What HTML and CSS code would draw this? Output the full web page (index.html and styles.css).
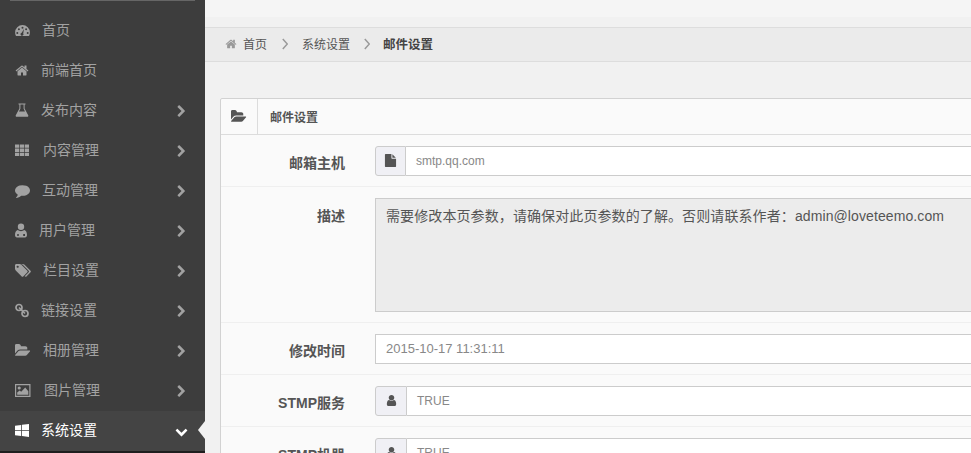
FILE: index.html
```html
<!DOCTYPE html>
<html lang="zh-CN">
<head>
<meta charset="utf-8">
<title>邮件设置</title>
<link rel="stylesheet" href="styles.css">
</head>
<body>
<svg class="defs" aria-hidden="true">
  <symbol id="home" viewBox="0 0 1792 1792"><path d="M1472 992v480q0 26-19 45t-45 19h-384v-384h-256v384h-384q-26 0-45-19t-19-45v-480q0-1 .5-3t.5-3l575-474 575 474q1 2 1 6zm223-69l-62 74q-8 9-21 11h-3q-13 0-21-7l-692-577-692 577q-12 8-24 7-13-2-21-11l-62-74q-8-10-7-23.5t11-21.5l719-599q32-26 76-26t76 26l244 204v-195q0-14 9-23t23-9h192q14 0 23 9t9 23v408l219 182q10 8 11 21.5t-7 23.5z"/></symbol>
  <symbol id="right" viewBox="0 0 1792 1792"><path d="M1363 877l-742 742q-19 19-45 19t-45-19l-166-166q-19-19-19-45t19-45l531-531-531-531q-19-19-19-45t19-45l166-166q19-19 45-19t45 19l742 742q19 19 19 45t-19 45z"/></symbol>
  <symbol id="down" viewBox="0 0 1792 1792"><path d="M1683 808l-742 741q-19 19-45 19t-45-19l-742-741q-19-19-19-45.5t19-45.5l166-165q19-19 45-19t45 19l531 531 531-531q19-19 45-19t45 19l166 165q19 19 19 45.5t-19 45.5z"/></symbol>
  <symbol id="folder" viewBox="0 0 1920 1792" preserveAspectRatio="xMinYMid meet"><path d="M1815 952q0 31-31 66l-336 396q-43 51-120.5 86.5t-143.5 35.5h-1088q-34 0-60.5-13t-26.5-43q0-31 31-66l336-396q43-51 120.5-86.5t143.5-35.5h1088q34 0 60.5 13t26.5 43zm-343-344v160h-832q-94 0-197 47.5t-164 119.5l-337 396-5 6q0-4-.5-12.5t-.5-12.5v-960q0-92 66-158t158-66h320q92 0 158 66t66 158v32h544q92 0 158 66t66 158z"/></symbol>
  <symbol id="user" viewBox="0 0 1792 1792"><path d="M1536 1399q0 109-62.5 187t-150.5 78h-854q-88 0-150.5-78t-62.5-187q0-85 8.5-160.5t31.5-152 58.5-131 94-89 134.5-34.5q131 128 313 128t313-128q76 0 134.5 34.5t94 89 58.5 131 31.5 152 8.5 160.5zm-256-887q0 159-112.5 271.5t-271.5 112.5-271.5-112.5-112.5-271.5 112.5-271.5 271.5-112.5 271.5 112.5 112.5 271.5z"/></symbol>
  <symbol id="comment" viewBox="0 0 1792 1792" preserveAspectRatio="xMinYMid meet"><path d="M1792 896q0 174-120 321.5t-326 233-450 85.5q-70 0-145-8-198 175-460 242-49 14-114 22-17 2-30.5-9t-17.5-29v-1q-3-4-.5-12t2-10 4.5-9.5l6-9 7-8.5 8-9q7-8 31-34.5t34.5-38 31-39.5 32.5-51 27-59 26-76q-157-89-247.5-220t-90.5-281q0-130 71-248.5t191-204.5 286-136.5 348-50.5q244 0 450 85.5t326 233 120 321.5z"/></symbol>
  <symbol id="file" viewBox="0 0 1792 1792"><path d="M1152 512v-472q22 14 36 28l408 408q14 14 28 36h-472zm-128 32q0 40 28 68t68 28h544v1056q0 40-28 68t-68 28h-1344q-40 0-68-28t-28-68v-1600q0-40 28-68t68-28h800v544z"/></symbol>
  <symbol id="tags" viewBox="0 0 1920 1792" preserveAspectRatio="xMinYMid meet"><path d="M448 448q0-53-37.5-90.5t-90.5-37.5-90.5 37.5-37.5 90.5 37.5 90.5 90.5 37.5 90.5-37.5 37.5-90.5zm1067 576q0 53-37 90l-491 492q-39 37-91 37-53 0-90-37l-715-716q-38-37-64.5-101t-26.5-117v-416q0-52 38-90t90-38h416q53 0 117 26.5t102 64.5l715 714q37 39 37 91zm384 0q0 53-37 90l-491 492q-38 37-91 37-36 0-59-14t-53-45l470-470q37-37 37-90 0-52-37-91l-715-714q-38-38-102-64.5t-117-26.5h224q53 0 117 26.5t102 64.5l715 714q37 39 37 91z"/></symbol>
  <symbol id="gauge" viewBox="0 0 15 15" preserveAspectRatio="xMinYMid meet"><path fill-rule="evenodd" d="M7.5 2a7.4 7.4 0 0 1 7.4 7.4c0 1.3-.3 2.5-.9 3.6H1a7.4 7.4 0 0 1-.9-3.6A7.4 7.4 0 0 1 7.5 2zM7.5 3.8a1 1 0 1 0 0 2 1 1 0 0 0 0-2zM3.9 5.3a1 1 0 1 0 0 2 1 1 0 0 0 0-2zM11.1 5.3a1 1 0 1 0 0 2 1 1 0 0 0 0-2zM2.3 8.9a1 1 0 1 0 0 2 1 1 0 0 0 0-2zM12.7 8.9a1 1 0 1 0 0 2 1 1 0 0 0 0-2zM9 6 6.7 9.8a1.5 1.5 0 1 0 1.5.6z"/></symbol>
  <symbol id="flask" viewBox="0 0 14 15" preserveAspectRatio="xMinYMid meet"><path fill-rule="evenodd" d="M3.5.5h7v1H9.6v4l3.6 6.7c.4.8 0 1.6-.8 1.6H1.6c-.8 0-1.2-.8-.8-1.6l3.6-6.7v-4h-.9zM5.4 1.5v4.3L4 8.6h6L8.6 5.8V1.5z"/></symbol>
  <symbol id="grid" viewBox="0 0 16 15" preserveAspectRatio="xMinYMid meet"><path d="M0 1.5h4.2v3.3H0zM4.9 1.5h4.2v3.3H4.9zM9.8 1.5H14v3.3H9.8zM0 5.6h4.2v3.3H0zM4.9 5.6h4.2v3.3H4.9zM9.8 5.6H14v3.3H9.8zM0 9.7h4.2V13H0zM4.9 9.7h4.2V13H4.9zM9.8 9.7H14V13H9.8z"/></symbol>
  <symbol id="doctor" viewBox="0 0 12 15" preserveAspectRatio="xMinYMid meet"><path fill-rule="evenodd" d="M6 .5a3.2 3.2 0 1 1 0 6.4A3.2 3.2 0 0 1 6 .5zM2.6 7.1C4.6 8.5 7.4 8.5 9.4 7.1c1.7.5 2.6 2.4 2.6 5 0 1.4-.8 2.4-2 2.4H2c-1.2 0-2-1-2-2.4 0-2.6.9-4.5 2.6-5zM3 11.1a1 1 0 1 0 0 2 1 1 0 0 0 0-2zM8.2 11.1v2h1.8v-2z"/></symbol>
  <symbol id="link" viewBox="0 0 14 15" preserveAspectRatio="xMinYMid meet"><g fill="none" stroke="#a2a2a2" stroke-width="1.7"><rect x="1" y="1.5" width="6" height="6" rx="3"/><rect x="7" y="7.5" width="6" height="6" rx="3"/><path d="M4 4.5l6 6"/></g></symbol>
  <symbol id="picture" viewBox="0 0 17 15" preserveAspectRatio="xMinYMid meet"><path fill-rule="evenodd" d="M0 1h15.5v13H0zM1.2 2.2v10.6h13.1V2.2zM2.2 11.8V9.6l2.4-2.2 1.6 1.4 4-4.4 3.1 3.8v3.6zM4.2 3.4a1.6 1.6 0 1 1 0 3.2 1.6 1.6 0 0 1 0-3.2z"/></symbol>
  <symbol id="windows" viewBox="0 0 14 15" preserveAspectRatio="xMinYMid meet"><path d="M0 2.8 6.2 1.9v5.1H0zM7 1.8 14 1v6H7zM0 7.8h6.2v5.2L0 12.2zM7 7.8h7V14l-7-.9z"/></symbol>
</svg>

<aside class="sidebar">
  <div class="search-edge"></div>
  <nav class="menu">
    <a class="menu-item"><svg class="ico w15"><use href="#gauge"/></svg><span class="menu-text">首页</span></a>
    <a class="menu-item"><svg class="ico w14"><use href="#home"/></svg><span class="menu-text">前端首页</span></a>
    <a class="menu-item"><svg class="ico w14"><use href="#flask"/></svg><span class="menu-text">发布内容</span><svg class="arrow"><use href="#right"/></svg></a>
    <a class="menu-item"><svg class="ico w16"><use href="#grid"/></svg><span class="menu-text">内容管理</span><svg class="arrow"><use href="#right"/></svg></a>
    <a class="menu-item"><svg class="ico w15"><use href="#comment"/></svg><span class="menu-text">互动管理</span><svg class="arrow"><use href="#right"/></svg></a>
    <a class="menu-item"><svg class="ico w12"><use href="#doctor"/></svg><span class="menu-text">用户管理</span><svg class="arrow"><use href="#right"/></svg></a>
    <a class="menu-item"><svg class="ico w16"><use href="#tags"/></svg><span class="menu-text">栏目设置</span><svg class="arrow"><use href="#right"/></svg></a>
    <a class="menu-item"><svg class="ico w14"><use href="#link"/></svg><span class="menu-text">链接设置</span><svg class="arrow"><use href="#right"/></svg></a>
    <a class="menu-item"><svg class="ico w16"><use href="#folder"/></svg><span class="menu-text">相册管理</span><svg class="arrow"><use href="#right"/></svg></a>
    <a class="menu-item"><svg class="ico w17"><use href="#picture"/></svg><span class="menu-text">图片管理</span><svg class="arrow"><use href="#right"/></svg></a>
    <a class="menu-item active"><svg class="ico w14"><use href="#windows"/></svg><span class="menu-text">系统设置</span><svg class="arrow"><use href="#down"/></svg><span class="caret"></span></a>
  </nav>
</aside>

<main class="main">
  <div class="topbar"></div>
  <div class="breadcrumb">
    <svg class="crumb-home"><use href="#home"/></svg>
    <span>首页</span>
    <svg class="crumb-sep" viewBox="0 0 6 12"><path d="M.8 1l4.5 5-4.5 5"/></svg>
    <span>系统设置</span>
    <svg class="crumb-sep crumb-sep-last" viewBox="0 0 6 12"><path d="M.8 1l4.5 5-4.5 5"/></svg>
    <strong>邮件设置</strong>
  </div>
  <section class="panel">
    <header class="panel-head">
      <div class="panel-icon"><svg class="folder"><use href="#folder"/></svg></div>
      <h2 class="panel-title">邮件设置</h2>
    </header>
    <div class="row">
      <label class="label">邮箱主机</label>
      <div class="group"><span class="addon"><svg class="addon-ico"><use href="#file"/></svg></span><div class="input">smtp.qq.com</div></div>
    </div>
    <div class="row row-tall">
      <label class="label">描述</label>
      <div class="textarea">需要修改本页参数，请确保对此页参数的了解。否则请联系作者：admin@loveteemo.com</div>
    </div>
    <div class="row">
      <label class="label">修改时间</label>
      <div class="group"><div class="input input-plain">2015-10-17 11:31:11</div></div>
    </div>
    <div class="row">
      <label class="label">STMP服务</label>
      <div class="group"><span class="addon addon-user"><svg class="addon-ico"><use href="#user"/></svg></span><div class="input">TRUE</div></div>
    </div>
    <div class="row">
      <label class="label">STMP机器</label>
      <div class="group"><span class="addon addon-user"><svg class="addon-ico"><use href="#user"/></svg></span><div class="input">TRUE</div></div>
    </div>
  </section>
</main>
</body>
</html>
```

FILE: styles.css
```css
* { box-sizing: border-box; }
html, body { height: 100%; }
body {
  margin: 0;
  height: 453px;
  overflow: hidden;
  display: flex;
  background: #f1f1f1;
  font-family: "Liberation Sans", "Noto Sans CJK SC", sans-serif;
  font-size: 14px;
  color: #555;
}
.defs { display: none; }

.sidebar {
  flex: 0 0 205px;
  height: 453px;
  background: #3d3d3d;
  border-bottom: 2px solid #1e1e1e;
  display: flex;
  flex-direction: column;
}
.search-edge { height: 1px; margin: 0 10px; background: #666; }
.menu { padding-top: 9px; }
.menu-item {
  height: 40px;
  padding-left: 15px;
  display: flex;
  align-items: center;
  color: #a2a2a2;
  fill: #a2a2a2;
  position: relative;
}
.ico { height: 15px; margin-right: 12px; flex: none; }
.w12 { width: 12px; }
.w14 { width: 14px; }
.w15 { width: 15px; }
.w16 { width: 16px; }
.w17 { width: 17px; }
.menu-text { flex: 1; line-height: 20px; }
.arrow { width: 13px; height: 13px; margin: 2px 17px 0 0; fill: #a2a2a2; }
.menu-item.active {
  background: #444;
  color: #fff;
  margin-top: 1px;
  padding-bottom: 2px;
}
.menu-item.active .ico, .menu-item.active .arrow { fill: #fff; }
.caret {
  position: absolute;
  right: 0;
  top: 10px;
  width: 0;
  height: 0;
  border-top: 9px solid transparent;
  border-bottom: 9px solid transparent;
  border-right: 7px solid #f1f1f1;
}

.main { flex: 1; min-width: 0; }
.topbar {
  height: 27px;
  background: linear-gradient(#f5f5f5 0 17px, #f1f1f1 17px);
}
.breadcrumb {
  height: 35px;
  background: #ebebeb;
  border-top: 1px solid #ddd;
  border-bottom: 1px solid #ddd;
  padding: 0 0 2px 20px;
  display: flex;
  align-items: center;
  font-size: 12px;
  color: #555;
}
.crumb-home { width: 12px; height: 12px; fill: #999; margin-right: 6px; }
.crumb-sep {
  width: 6px;
  height: 12px;
  margin: 0 14px 0 15px;
  fill: none;
  stroke: #999;
  stroke-width: 1.5;
}
.crumb-sep-last { margin: 0 13px 0 14px; }
.breadcrumb strong { color: #444; font-size: 12.5px; }

.panel {
  margin: 36px 0 0 15px;
  width: 900px;
  background: #fafafa;
  border: 1px solid #d2d2d2;
  border-radius: 2px 0 0 0;
}
.panel-head {
  height: 36px;
  display: flex;
  align-items: center;
  border-bottom: 1px solid #dcdcdc;
}
.panel-icon {
  width: 37px;
  height: 35px;
  border-right: 1px solid #dcdcdc;
  display: flex;
  align-items: center;
  justify-content: center;
}
.folder { width: 16px; height: 15px; fill: #555; }
.panel-title { margin: 0 0 0 12px; font-size: 12px; font-weight: 700; color: #555; }

.row {
  height: 52px;
  display: flex;
  align-items: center;
  border-bottom: 1px solid #efefef;
}
.row-tall { height: 136px; align-items: flex-start; padding-top: 11px; }
.label {
  width: 124px;
  padding-top: 2px;
  text-align: right;
  font-weight: 700;
  font-size: 14px;
  color: #555;
  flex: none;
}
.row-tall .label { line-height: 20px; padding-top: 8px; }
.group {
  margin-left: 30px;
  width: 700px;
  height: 30px;
  display: flex;
}
.addon {
  width: 31px;
  background: #f0f0f5;
  border: 1px solid #ccc;
  border-radius: 3px 0 0 3px;
  display: flex;
  align-items: center;
  justify-content: center;
  flex: none;
}
.addon-user { width: 32px; }
.addon-ico { width: 13px; height: 13px; fill: #555; }
.input {
  flex: 1;
  background: #fff;
  border: 1px solid #ccc;
  border-left: 0;
  padding-left: 10px;
  font-size: 12px;
  line-height: 28px;
  color: #888;
}
.input-plain { border-left: 1px solid #ccc; font-size: 13px; color: #888; }
.textarea {
  margin-left: 30px;
  width: 700px;
  height: 114px;
  background: #ececec;
  border: 1px solid #ccc;
  padding: 7px 10px;
  font-size: 14px;
  line-height: 20px;
  letter-spacing: .1px;
  color: #555;
}
```
